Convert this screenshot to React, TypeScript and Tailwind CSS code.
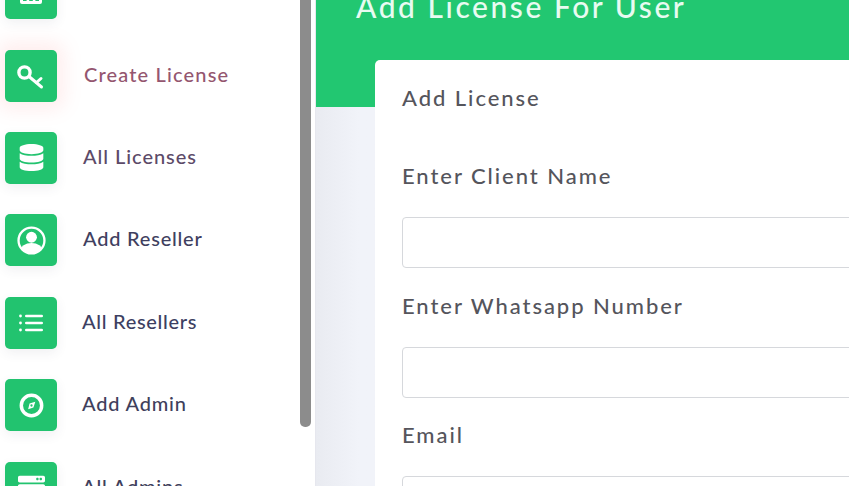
import { ReactNode } from 'react';
import { FaDatabase, FaServer } from 'react-icons/fa';

const font = { fontFamily: 'Lato, "Noto Sans", sans-serif' };

function KeyIcon() {
  return (
    <svg viewBox="0 0 28 28" className="w-[28px] h-[28px]" fill="none" stroke="white" strokeLinecap="round">
      <circle cx="7.5" cy="10.5" r="5.6" strokeWidth="3.4" />
      <path d="M12 14.5 L24.5 25" strokeWidth="3" />
      <path d="M19.5 20.5 L24 16.5" strokeWidth="3" />
    </svg>
  );
}

function UserIcon() {
  return (
    <svg viewBox="0 0 30 30" className="w-[29px] h-[29px]" fill="none">
      <clipPath id="user-clip">
        <circle cx="15" cy="15" r="13" />
      </clipPath>
      <circle cx="15" cy="15" r="13.4" stroke="white" strokeWidth="2.4" />
      <g clipPath="url(#user-clip)" fill="white">
        <circle cx="15" cy="11.6" r="5.6" />
        <ellipse cx="15" cy="26" rx="11.5" ry="8.5" />
      </g>
    </svg>
  );
}

function ListIcon() {
  return (
    <svg viewBox="0 0 24 18" className="w-[24px] h-[18px]" fill="white">
      <circle cx="1.5" cy="2" r="1.4" />
      <circle cx="1.5" cy="9" r="1.4" />
      <circle cx="1.5" cy="16" r="1.4" />
      <rect x="6" y="0.7" width="18" height="2.6" rx="1.3" />
      <rect x="6" y="7.7" width="18" height="2.6" rx="1.3" />
      <rect x="6" y="14.7" width="18" height="2.6" rx="1.3" />
    </svg>
  );
}

function CompassIcon() {
  return (
    <svg viewBox="0 0 26 26" className="w-[25px] h-[25px]" fill="none">
      <circle cx="13" cy="13" r="10.6" stroke="white" strokeWidth="3.6" />
      <path d="M17 9 L15 15 L9.5 17 L11 11 Z" fill="white" />
      <circle cx="13" cy="13" r="1.2" fill="#22c36f" />
    </svg>
  );
}

function TableIcon() {
  return (
    <svg viewBox="0 0 26 26" className="w-[26px] h-[26px]" fill="white">
      <path d="M2 3 H24 V22 a2 2 0 0 1 -2 2 H4 a2 2 0 0 1 -2 -2 Z" />
      <rect x="5" y="16" width="3.6" height="5" fill="#22c36f" />
      <rect x="11.2" y="16" width="3.6" height="5" fill="#22c36f" />
      <rect x="17.4" y="16" width="3.6" height="5" fill="#22c36f" />
    </svg>
  );
}

const items: { label: string; icon: ReactNode; text: string; active?: boolean }[] = [
  { label: '', icon: <TableIcon />, text: '' },
  { label: 'Create License', icon: <KeyIcon />, text: 'text-[#94566f] tracking-[1.15px] ml-[27px]', active: true },
  { label: 'All Licenses', icon: <FaDatabase className="text-white text-[27px]" />, text: 'text-[#5c4a68] tracking-[0.95px] ml-[26px]' },
  { label: 'Add Reseller', icon: <UserIcon />, text: 'text-[#3f3f60] tracking-[0.78px] ml-[26px]' },
  { label: 'All Resellers', icon: <ListIcon />, text: 'text-[#3d3f62] tracking-[0.7px] ml-[25px]' },
  { label: 'Add Admin', icon: <CompassIcon />, text: 'text-[#3f3f5c] tracking-[0.8px] ml-[25px]' },
  { label: 'All Admins', icon: <FaServer className="text-white text-[27px]" />, text: 'text-[#3f3f5c] tracking-[0.8px] ml-[25px]' },
];

function Field({ label }: { label: string }) {
  return (
    <div className="mb-[23.5px]">
      <div className="text-[22px] leading-[28px] font-medium tracking-[1.95px] text-[#55555c] mb-[27px]">{label}</div>
      <div className="h-[51px] rounded-[4px] border border-[#d6d8dc] bg-white" />
    </div>
  );
}

export default function App() {
  return (
    <div className="relative flex h-[486px] w-[849px] overflow-hidden bg-[#eef0f6]" style={font}>
      {/* sidebar */}
      <aside className="relative w-[316px] shrink-0 bg-white border-r border-[#e6e7ee] overflow-hidden">
        <ul className="-mt-[32.8px] flex flex-col gap-[30.4px] pl-[5px]">
          {items.map((item, i) => (
            <li key={i} className="flex items-center h-[52px]">
              <div
                className={`w-[52px] h-[52px] shrink-0 rounded-[5px] bg-[#22c36f] flex items-center justify-center ${
                  item.active ? 'shadow-[0_0_18px_8px_rgba(255,120,120,0.13)]' : 'shadow-[0_4px_12px_rgba(60,60,90,0.08)]'
                }`}
              >
                {item.icon}
              </div>
              <span className={`text-[20px] font-medium -translate-y-[2.5px] ${item.text}`}>
                {item.label}
              </span>
            </li>
          ))}
        </ul>
        {/* scrollbar thumb */}
        <div className="absolute left-[300px] top-0 w-[11px] h-[427px] rounded-b-[5px] bg-[#8c8c8c]" />
      </aside>

      {/* main */}
      <main className="flex-1 min-w-0 bg-gradient-to-r from-[#e9ebf1] to-[#f1f3f9] to-[8%]">
        <header className="flow-root h-[107px] bg-[#22c771] pl-[40px]">
          <h1 className="-mt-[13px] text-[30px] leading-[38px] font-medium tracking-[2.55px] text-[#e8fbf1]">
            Add License For User
          </h1>
        </header>
        <section className="-mt-[47px] ml-[59px] w-[600px] rounded-t-[5px] bg-white pl-[27px] pt-[23px] h-[500px]">
          <h2 className="text-[22px] leading-[30px] font-medium tracking-[1.95px] text-[#55555c] mb-[49px]">Add License</h2>
          <Field label="Enter Client Name" />
          <Field label="Enter Whatsapp Number" />
          <Field label="Email" />
        </section>
      </main>
    </div>
  );
}
